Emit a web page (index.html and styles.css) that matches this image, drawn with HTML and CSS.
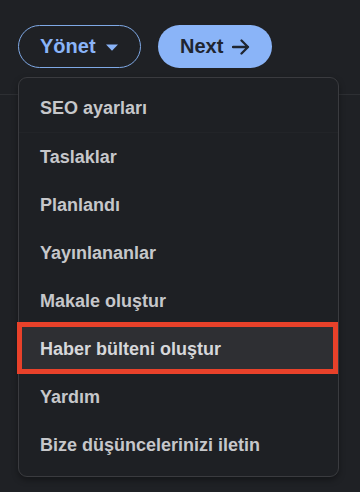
FILE: index.html
```html
<!DOCTYPE html>
<html lang="tr">
<head>
<meta charset="utf-8">
<link rel="stylesheet" href="styles.css">
</head>
<body>
<div class="page">
  <header class="toolbar">
    <button class="btn btn-outline">Yönet
      <svg class="caret" width="12" height="7" viewBox="0 0 12 7"><path d="M0 0.5 L12 0.5 L6 6.8 Z" fill="#8ab4f8"/></svg>
    </button>
    <button class="btn btn-filled">Next
      <svg class="arrow" width="18" height="16" viewBox="0 0 18 16"><path d="M1 8 H16 M9.5 1.5 L16 8 L9.5 14.5" fill="none" stroke="#1f2530" stroke-width="2.3" stroke-linecap="round" stroke-linejoin="round"/></svg>
    </button>
  </header>
  <nav class="menu">
    <div class="item item-first">SEO ayarları</div>
    <div class="item">Taslaklar</div>
    <div class="item">Planlandı</div>
    <div class="item">Yayınlananlar</div>
    <div class="item">Makale oluştur</div>
    <div class="item item-active">Haber bülteni oluştur</div>
    <div class="item">Yardım</div>
    <div class="item">Bize düşüncelerinizi iletin</div>
  </nav>
</div>
</body>
</html>
```
FILE: styles.css
```css
html, body {
  margin: 0;
  padding: 0;
  background: #1f2125;
  width: 360px;
  height: 492px;
  overflow: hidden;
  font-family: "Liberation Sans", Arial, sans-serif;
}
.page {
  position: relative;
  width: 360px;
  height: 492px;
}
.toolbar {
  display: flex;
  gap: 17px;
  padding: 25px 18px 0;
  height: 69px;
  border-bottom: 1px solid #2d2f33;
}
.btn {
  display: flex;
  align-items: center;
  height: 43px;
  box-sizing: border-box;
  border-radius: 22px;
  font-family: inherit;
  font-size: 20px;
  font-weight: bold;
  cursor: pointer;
}
.btn-outline {
  width: 123px;
  padding: 0 0 0 21px;
  background: transparent;
  border: 1.5px solid #7fa9e6;
  color: #8ab4f8;
}
.caret {
  margin-left: 10px;
  margin-top: 1px;
}
.btn-filled {
  width: 114px;
  padding: 0 0 0 22px;
  background: #8ab4f8;
  border: none;
  color: #1f2530;
}
.arrow {
  margin-left: 9px;
}
.menu {
  position: absolute;
  top: 77px;
  left: 18px;
  width: 321px;
  box-sizing: border-box;
  background: #1e2024;
  border: 1px solid #3a3b3f;
  border-radius: 9px;
  padding: 6px 0 7px;
  box-shadow: 0 3px 6px rgba(0, 0, 0, 0.35);
}
.item {
  position: relative;
  height: 48px;
  display: flex;
  align-items: center;
  padding-left: 21px;
  font-size: 18px;
  font-weight: bold;
  color: #c6c7ca;
}
.item-first {
  border-bottom: 1px solid #222428;
}
.item-active {
  background: #2e2f33;
  color: #d6d7da;
}
.item-active::after {
  content: "";
  position: absolute;
  top: -3px;
  bottom: -1px;
  left: -2px;
  right: 0;
  border: 5px solid #e8412a;
}
```
